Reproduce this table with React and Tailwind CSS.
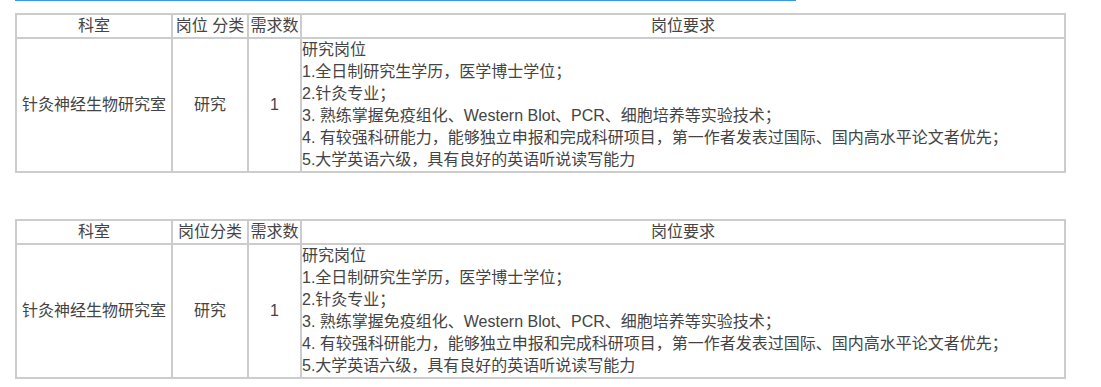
import React from "react";

const lines = [
  "研究岗位",
  "1.全日制研究生学历，医学博士学位；",
  "2.针灸专业；",
  "3. 熟练掌握免疫组化、Western Blot、PCR、细胞培养等实验技术；",
  "4. 有较强科研能力，能够独立申报和完成科研项目，第一作者发表过国际、国内高水平论文者优先；",
  "5.大学英语六级，具有良好的英语听说读写能力",
];

function JobTable({ typeLabel }) {
  const cell = "border border-[#cccccc] p-0 font-normal";
  return (
    <table className="table-fixed border-separate border-spacing-0 border border-[#cccccc] w-[1051px] text-[16px] leading-[22px] text-[#444]">
      <thead>
        <tr className="h-[24px]">
          <th className={`${cell} w-[156px] text-center`}>科室</th>
          <th className={`${cell} w-[76px] text-center`}>{typeLabel}</th>
          <th className={`${cell} w-[53px] text-center`}>需求数</th>
          <th className={`${cell} text-center`}>岗位要求</th>
        </tr>
      </thead>
      <tbody>
        <tr>
          <td className={`${cell} text-center align-middle`}>针灸神经生物研究室</td>
          <td className={`${cell} text-center align-middle`}>研究</td>
          <td className={`${cell} text-center align-middle`}>1</td>
          <td className={`${cell} text-left align-top`}>
            {lines.map((l) => (
              <div key={l}>{l}</div>
            ))}
          </td>
        </tr>
      </tbody>
    </table>
  );
}

export default function App() {
  return (
    <div
      className="min-h-[387px] bg-white pl-[15px]"
      style={{ fontFamily: '"Liberation Sans", "Noto Sans CJK SC", sans-serif' }}
    >
      <div className="h-px w-[781px] bg-[#3399ff]" />
      <div className="mt-[12px]">
        <JobTable typeLabel="岗位 分类" />
      </div>
      <div className="mt-[46px]">
        <JobTable typeLabel="岗位分类" />
      </div>
    </div>
  );
}
